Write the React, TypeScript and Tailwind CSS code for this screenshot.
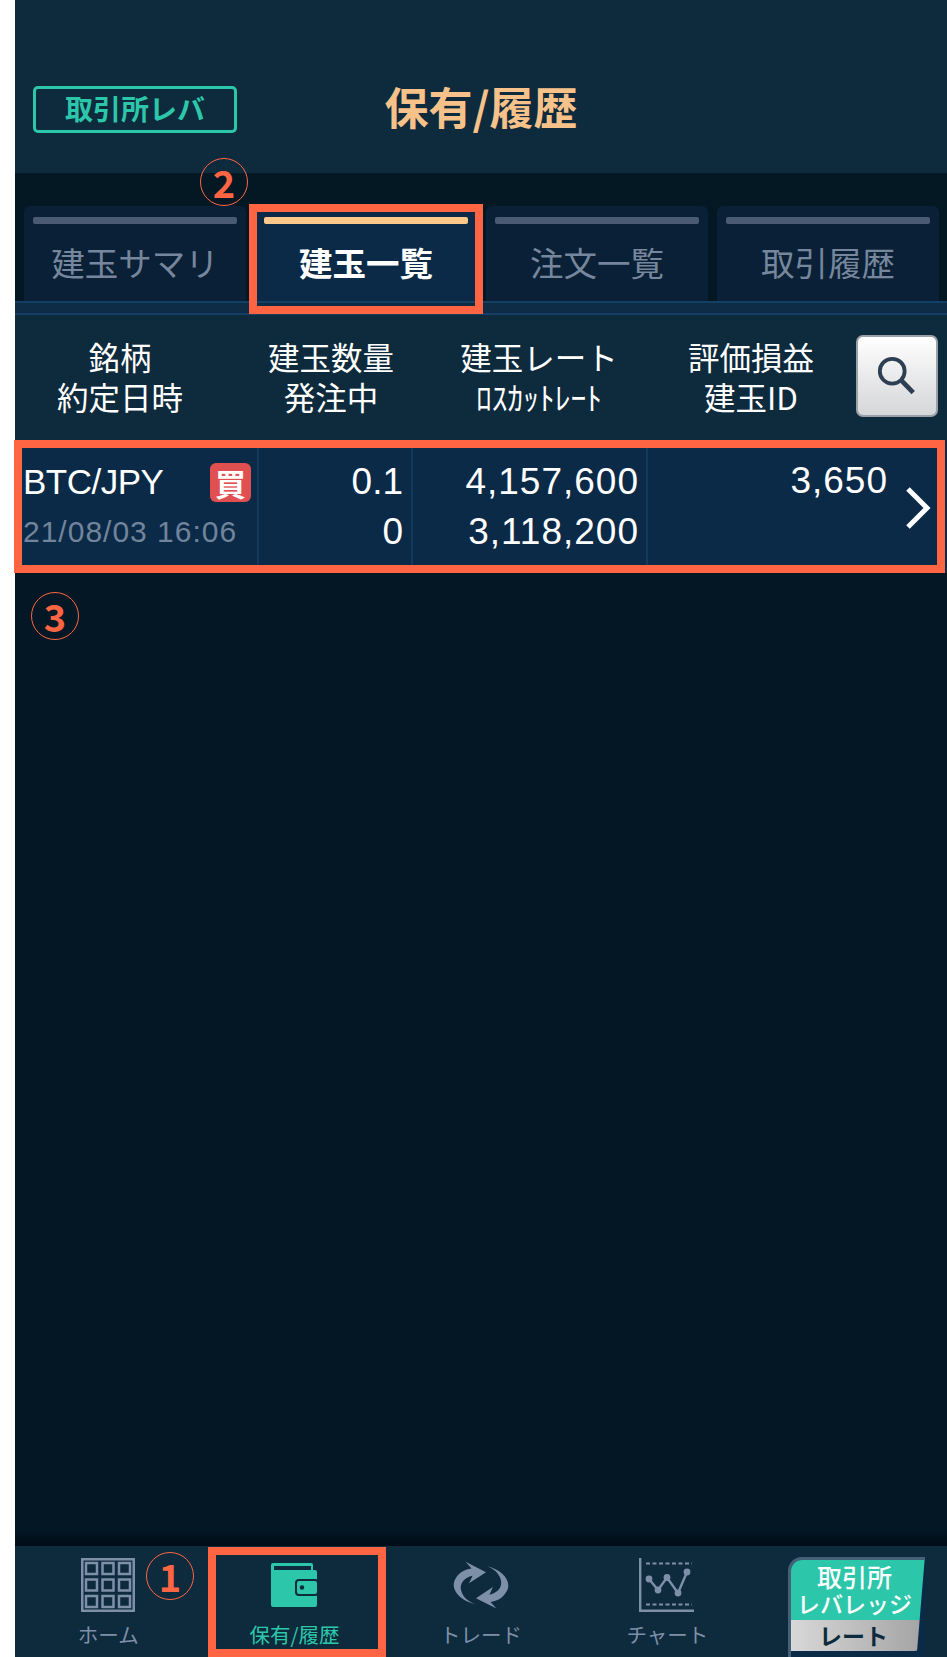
const TABS = [
  { label: '建玉サマリ', active: false },
  { label: '建玉一覧', active: true },
  { label: '注文一覧', active: false },
  { label: '取引履歴', active: false },
];

const HEAD_COLS = [
  { top: '銘柄', bottom: '約定日時', width: 'w-[210px]' },
  { top: '建玉数量', bottom: '発注中', width: 'w-[212px]' },
  { top: '建玉レート', bottom: 'ﾛｽｶｯﾄﾚｰﾄ', width: 'w-[204px] mr-[5px]' },
  { top: '評価損益', bottom: '建玉ID', width: 'w-[210px]' },
];

function HomeIcon() {
  return (
    <svg width="54" height="54" viewBox="0 0 54 54" fill="none" stroke="#7e90a8" strokeWidth="2.5">
      <rect x="1.25" y="1.25" width="51.5" height="51.5" />
      {[5, 21.5, 38].map((y) =>
        [5, 21.5, 38].map((x) => <rect key={`${x}-${y}`} x={x} y={y} width="11" height="11" />),
      )}
    </svg>
  );
}

function WalletIcon() {
  return (
    <svg width="50" height="44" viewBox="0 0 50 44">
      <path d="M3 0h38a2 2 0 0 1 2 2v5h2a2 2 0 0 1 2 2v33a2 2 0 0 1-2 2H3a2 2 0 0 1-2-2V2a2 2 0 0 1 2-2z" fill="#2cc7ab" />
      <rect x="4" y="3" width="37" height="4" fill="#0e2a3d" />
      <rect x="26" y="17" width="22" height="15" rx="3" fill="#2cc7ab" stroke="#0e2a3d" strokeWidth="2" />
      <circle cx="32" cy="24.5" r="2.2" fill="#0e2a3d" />
    </svg>
  );
}

function TradeIcon() {
  const arrow =
    'M105 150C60 140 30 105 50 75C60 58 75 50 95 47L78 28L137 58L88 90L98 68C75 72 60 90 65 110C70 130 85 142 105 150Z';
  return (
    <svg width="64" height="52" viewBox="30 20 185 150" fill="#7e90a8">
      <path d={arrow} />
      <path d={arrow} transform="rotate(180 122.5 95.5)" />
    </svg>
  );
}

function ChartIcon() {
  return (
    <svg width="56" height="54" viewBox="0 0 56 54" fill="none" stroke="#7e90a8">
      <path d="M1.2 0V52.7H55" strokeWidth="2.4" />
      <path d="M7 5.5H53M7 46.5H53" strokeWidth="2" strokeDasharray="4 2.5" />
      <path d="M10 21L19 32L28 19.500L39 35L48 14" strokeWidth="2.4" />
      {[[10, 21], [19, 32], [28, 19.5], [39, 35], [48, 14]].map(([cx, cy]) => (
        <circle key={cx} cx={cx} cy={cy} r="3.400" fill="#7e90a8" stroke="none" />
      ))}
    </svg>
  );
}

function NavItem({ icon, label, color }: { icon: React.ReactNode; label: string; color: string }) {
  return (
    <div className="flex flex-col items-center">
      <div className="flex h-[60px] items-center justify-center">{icon}</div>
      <span className={`mt-[5px] text-[20.5px] leading-[28px] ${color}`}>{label}</span>
    </div>
  );
}

function Marker({ char, className }: { char: string; className: string }) {
  return (
    <span
      className={`absolute flex h-[48px] w-[48px] items-center justify-center rounded-full border-[1.5px] border-[#ff6543] text-[38px] font-bold leading-none text-[#ff6543] ${className}`}
    >
      {char}
    </span>
  );
}

export default function App() {
  return (
    <div className="relative h-[1657px] w-[947px] overflow-hidden bg-white pl-[15px] font-['Noto_Sans_CJK_JP',sans-serif]">
      <div className="flex h-full flex-col bg-[#031724]">
        <header className="grid h-[173px] shrink-0 grid-cols-[1fr_auto_1fr] items-center bg-[#0e2a3d] px-[18px] pt-[46px]">
          <div className="flex h-[47px] w-[204px] items-center justify-center rounded-[5px] border-[3px] border-[#2cc7ab] pb-[3px] text-[28px] font-bold text-[#2cc7ab]">
            取引所レバ
          </div>
          <h1 className="-mt-[7px] text-[44px] font-bold leading-none text-[#f7c289]">保有/履歴</h1>
          <div />
        </header>

        <div className="shrink-0 bg-[#041824] pt-[33px]">
          <div className="grid grid-cols-[222px_222px_222px_222px] gap-x-[9px] pl-[9px]">
            {TABS.map((tab) => (
              <div
                key={tab.label}
                className={`flex h-[95px] flex-col rounded-t-[6px] px-[9px] pt-[11px] ${tab.active ? 'bg-[#0b2a47]' : 'bg-[#0a2036]'}`}
              >
                <div className={`h-[7px] rounded-[2px] ${tab.active ? 'bg-[#fcc88a]' : 'bg-[#4a5a72]'}`} />
                <div
                  className={`flex flex-1 items-center justify-center pb-[2px] text-[33.5px] leading-none ${tab.active ? 'font-bold text-white' : 'text-[#76879d]'}`}
                >
                  {tab.label}
                </div>
              </div>
            ))}
          </div>
          <div className="flex h-[14px] flex-col justify-between bg-[#0f2c47]">
            <div className="h-[2px] bg-[#123f63]" />
            <div className="h-[2px] bg-[#123f63]" />
          </div>
        </div>

        <div className="flex h-[125px] shrink-0 items-center bg-[#0e2a3d] pb-[4px]">
          {HEAD_COLS.map((col) => (
            <div key={col.top} className={`${col.width} text-center text-[31.5px] leading-[40px] text-white`}>
              <div>{col.top}</div>
              <div>{col.bottom}</div>
            </div>
          ))}
          <button className="flex h-[82px] w-[82px] items-center justify-center rounded-[7px] border-2 border-[#9aa1a8] bg-gradient-to-b from-white to-[#d5d6d8]">
            <svg width="42" height="42" viewBox="0 0 44 44" fill="none" stroke="#2d3f53" strokeWidth="4">
              <circle cx="17" cy="17" r="13" />
              <path d="M26.500 26.500L39 39.500" strokeWidth="5" />
            </svg>
          </button>
        </div>

        <div className="flex h-[133px] shrink-0 bg-[#0b2a47] font-['Liberation_Sans','Noto_Sans_CJK_JP',sans-serif] text-[37px] leading-[50px] text-white">
          <div className="flex w-[244px] flex-col justify-center border-r-2 border-[#123a5c] pl-[8px] pt-[1px]">
            <div className="flex items-center justify-between pr-[6px]">
              <span className="text-[35px] tracking-[-0.5px]">BTC/JPY</span>
              <span className="flex h-[39px] w-[41px] items-center justify-center rounded-[6px] bg-[#e05050] font-['Noto_Sans_CJK_JP',sans-serif] text-[31px] font-bold leading-none">
                買
              </span>
            </div>
            <div className="text-[30px] tracking-[1px] text-[#71849b]">21/08/03 16:06</div>
          </div>
          <div className="flex w-[154px] flex-col justify-center border-r-2 border-[#123a5c] pr-[8px] pt-[1px] text-right">
            <div>0.1</div>
            <div>0</div>
          </div>
          <div className="flex w-[235px] flex-col justify-center border-r-2 border-[#123a5c] pr-[7px] pt-[1px] text-right tracking-[1px]">
            <div>4,157,600</div>
            <div>3,118,200</div>
          </div>
          <div className="flex flex-1 items-center">
            <div className="w-[240px] self-start pt-[16px] text-right tracking-[1px]">3,650</div>
            <svg className="ml-[17px] mt-[2px]" width="26" height="42" viewBox="0 0 26 42" fill="none" stroke="white" strokeWidth="5">
              <path d="M3 2L22 21L3 40" />
            </svg>
          </div>
        </div>

        <div className="flex flex-1 flex-col justify-end">
          <div className="h-[16px] bg-gradient-to-b from-[#031724] to-[#010c16]" />
        </div>

        <nav className="grid h-[111px] shrink-0 grid-cols-5 bg-[#0e2a3d] pt-[9px]">
          <NavItem icon={<HomeIcon />} label="ホーム" color="text-[#7e90a8]" />
          <NavItem icon={<WalletIcon />} label="保有/履歴" color="text-[#2cc7ab]" />
          <NavItem icon={<TradeIcon />} label="トレード" color="text-[#7e90a8]" />
          <NavItem icon={<ChartIcon />} label="チャート" color="text-[#7e90a8]" />
          <div className="relative">
            <div className="absolute left-[27px] top-[2px] h-[100px] w-[137px] rounded-tl-[14px] border-l-[3px] border-t-[3px] border-[#47607a] bg-[#0b2a47]">
              <div className="flex h-full flex-col pb-[6px] [clip-path:polygon(0_0,100%_0,94%_100%,0_100%)]">
                <div className="flex h-[60px] flex-col items-center justify-center rounded-tl-[11px] bg-[#2cc7ab] pr-[6px] font-medium leading-[27px] text-white">
                  <div className="text-[25px]">取引所</div>
                  <div className="text-[23px]">レバレッジ</div>
                </div>
                <div className="flex flex-1 items-center justify-center rounded-br-[10px] bg-gradient-to-r from-[#d8d8d8] to-[#a3a3a3] pr-[8px] text-[23px] font-bold leading-none text-[#0e2a3d]">
                  レート
                </div>
              </div>
            </div>
          </div>
        </nav>
      </div>

      <div className="absolute left-[249px] top-[204px] h-[110px] w-[234px] border-8 border-[#ff6543]" />
      <div className="absolute left-[14px] top-[440px] h-[133px] w-[931px] border-8 border-[#ff6543]" />
      <div className="absolute left-[208px] top-[1547px] h-[110px] w-[178px] border-8 border-[#ff6543]" />
      <Marker char="2" className="left-[200px] top-[158px]" />
      <Marker char="3" className="left-[31px] top-[592px]" />
      <Marker char="1" className="left-[146px] top-[1552px]" />
    </div>
  );
}
